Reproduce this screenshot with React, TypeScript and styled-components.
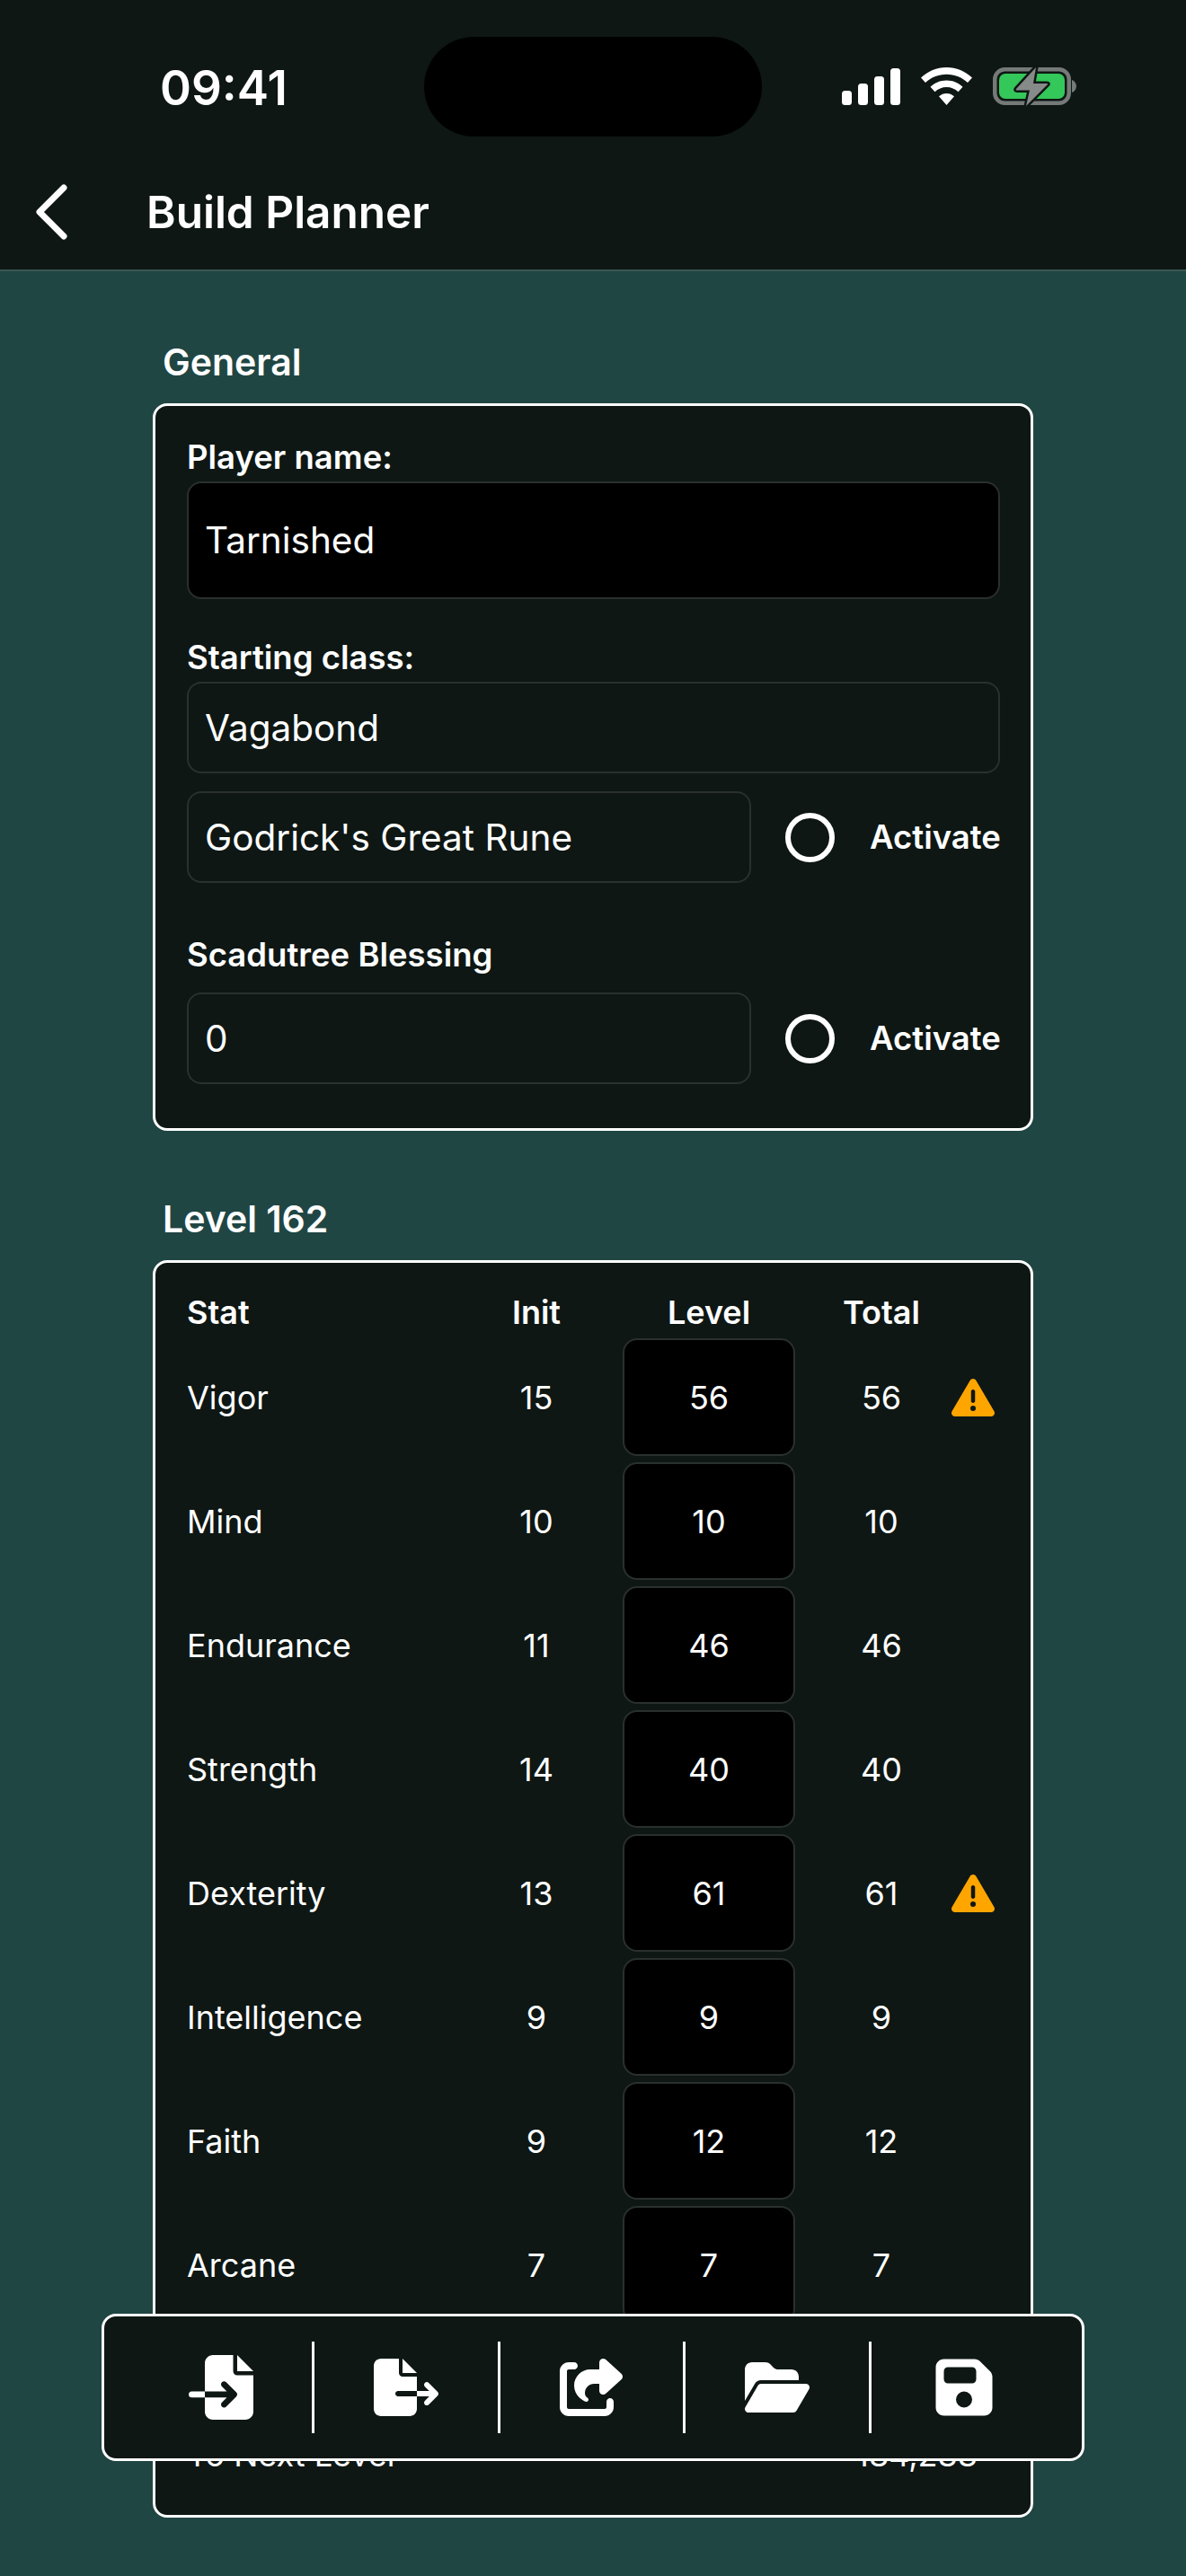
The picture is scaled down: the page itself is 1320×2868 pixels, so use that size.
import React from "react";
import styled, { createGlobalStyle } from "styled-components";
import {
  FaFileExport,
  FaFileImport,
  FaFloppyDisk,
  FaFolderOpen,
  FaShareFromSquare,
  FaTriangleExclamation,
} from "react-icons/fa6";

const GlobalStyle = createGlobalStyle`
  html, body {
    margin: 0;
    padding: 0;
    background: #204644;
  }
  * {
    box-sizing: border-box;
  }
`;

// PAGE
const Screen = styled.div`
  position: relative;
  width: 1320px;
  height: 2868px;
  overflow: hidden;
  background: #204644;
  color: #fff;
  font-family: Inter, "Liberation Sans", sans-serif;
`;

// HEADER
const Header = styled.header`
  height: 302px;
  background: #0e1714;
  border-bottom: 2px solid #3b5653;
`;

const StatusBar = styled.div`
  display: flex;
  align-items: flex-start;
  height: 190px;
  padding: 41px 122px 0 178px;
`;

const Clock = styled.div`
  width: 294px;
  padding-top: 29px;
  font-size: 53px;
  line-height: 56px;
  font-weight: 600;
`;

const Island = styled.div`
  width: 376px;
  height: 111px;
  border-radius: 56px;
  background: #000;
`;

const StatusIcons = styled.div`
  display: flex;
  align-items: center;
  gap: 23px;
  margin-left: 89px;
  padding-top: 32px;
`;

const NavBar = styled.div`
  display: flex;
  align-items: center;
  height: 92px;
  padding-left: 38px;
`;

const BackIcon = styled.svg`
  width: 40px;
  height: 62px;
  margin-right: 85px;
`;

const Title = styled.h1`
  margin: 0;
  font-size: 49.5px;
  line-height: 60px;
  font-weight: 600;
`;

// SECTIONS
const Main = styled.main`
  padding: 0 170px;
`;

const SectionTitle = styled.h2<{ $top: number }>`
  margin: ${(p) => p.$top}px 0 0 11px;
  height: 51px;
  font-size: 41px;
  line-height: 51px;
  font-weight: 600;
`;

const Card = styled.section<{ $height: number }>`
  height: ${(p) => p.$height}px;
  margin-top: 20px;
  padding: 33px 34px 0 35px;
  background: #0e1714;
  border: 3px solid #fff;
  border-radius: 16px;
  overflow: hidden;
`;

const Label = styled.div<{ $top?: number }>`
  height: 48px;
  margin-top: ${(p) => p.$top ?? 0}px;
  font-size: 36.5px;
  line-height: 48px;
  font-weight: 600;
`;

const Field = styled.div<{ $dark?: boolean; $tall?: boolean }>`
  display: flex;
  flex: 1;
  align-items: center;
  height: ${(p) => (p.$tall ? 131 : 102)}px;
  padding: 0 18px;
  background: ${(p) => (p.$dark ? "#000" : "#0e1714")};
  border: 2px solid #2a302e;
  border-radius: 16px;
  font-size: 40.5px;
  font-weight: 400;
`;

const FieldRow = styled.div<{ $top?: number }>`
  display: flex;
  align-items: center;
  margin-top: ${(p) => p.$top ?? 0}px;
`;

const Radio = styled.div`
  flex: none;
  width: 55px;
  height: 55px;
  margin: 0 39px 0 38px;
  border: 6px solid #fff;
  border-radius: 50%;
`;

const ActivateText = styled.div`
  flex: none;
  width: 145px;
  font-size: 36.5px;
  font-weight: 600;
  white-space: nowrap;
`;

// STATS TABLE
const StatGrid = styled.div`
  display: grid;
  grid-template-columns: 293px 192px 192px 192px 1fr;
  align-items: center;
`;

const HeaderRow = styled(StatGrid)`
  height: 48px;
  margin: -2px 0 5px;
  font-size: 36px;
  line-height: 48px;
  font-weight: 600;
`;

const StatRow = styled(StatGrid)`
  height: 131px;
  margin-bottom: 7px;
  font-size: 36px;
`;

const Cell = styled.div<{ $center?: boolean }>`
  text-align: ${(p) => (p.$center ? "center" : "left")};
`;

const LevelBox = styled.div`
  display: flex;
  align-items: center;
  justify-content: center;
  height: 131px;
  background: #000;
  border: 2px solid #2a302e;
  border-radius: 16px;
`;

const Warning = styled(FaTriangleExclamation)`
  display: block;
  margin-left: -18px;
  color: #ffa500;
`;

const FooterRow = styled.div`
  display: flex;
  justify-content: space-between;
  margin-top: 122px;
  padding-right: 25px;
  font-size: 36px;
  line-height: 48px;
`;

// TOOLBAR
const Toolbar = styled.nav`
  position: absolute;
  left: 113px;
  top: 2576px;
  display: flex;
  align-items: center;
  width: 1094px;
  height: 164px;
  padding: 0 28px;
  background: #0e1714;
  border: 3px solid #fff;
  border-radius: 16px;
`;

const ToolButton = styled.div<{ $last?: boolean }>`
  display: flex;
  align-items: center;
  justify-content: center;
  width: 207px;
  height: 102px;
  border-right: ${(p) => (p.$last ? "none" : "3px solid #fff")};
`;

const stats = [
  { name: "Vigor", init: 15, level: 56, warn: true },
  { name: "Mind", init: 10, level: 10 },
  { name: "Endurance", init: 11, level: 46 },
  { name: "Strength", init: 14, level: 40 },
  { name: "Dexterity", init: 13, level: 61, warn: true },
  { name: "Intelligence", init: 9, level: 9 },
  { name: "Faith", init: 9, level: 12 },
  { name: "Arcane", init: 7, level: 7 },
];

export default function App() {
  return (
    <>
      <GlobalStyle />
      <Screen>
        <Header>
          <StatusBar>
            <Clock>09:41</Clock>
            <Island />
            <StatusIcons>
              <svg width="65" height="41" viewBox="0 0 65 41" fill="#fff">
                <rect x="0" y="25" width="11" height="16" rx="3.5" />
                <rect x="18" y="17" width="11" height="24" rx="3.5" />
                <rect x="36" y="9" width="11" height="32" rx="3.5" />
                <rect x="54" y="0" width="11" height="41" rx="3.5" />
              </svg>
              <svg width="57" height="42" viewBox="0 0 57 42" fill="#fff">
                <path d="M28.5 0C17.5 0 7.7 4.3 0 11.5L5 17C11 11.3 19.3 7.7 28.5 7.7S46 11.3 52 17L57 11.5C49.3 4.3 39.5 0 28.5 0Z" />
                <path d="M28.5 14.5C21.5 14.5 15 17.3 10.5 21.8L15.5 27.3C19 24 23.5 22 28.5 22S38 24 41.5 27.3L46.5 21.8C42 17.3 35.5 14.5 28.5 14.5Z" />
                <path d="M28.5 29C25.3 29 22.4 30.2 20 32.3L28.5 42L37 32.3C34.6 30.2 31.7 29 28.5 29Z" />
              </svg>
              <svg width="93" height="46" viewBox="0 0 93 46">
                <rect x="2.25" y="4.25" width="82.5" height="37.5" rx="11" fill="none" stroke="#757a78" strokeWidth="4.5" />
                <rect x="7" y="9" width="73" height="28" rx="7" fill="#34c759" />
                <path d="M88 16C91 17 93 20 93 23S91 29 88 30Z" fill="#757a78" />
                <path
                  d="M48 2L26 26Q25 27.500 27 27.500H41L37 45L61 21Q62 20 60 20H45Z"
                  fill="#868a88"
                  stroke="#0e1714"
                  strokeWidth="5"
                  strokeLinejoin="round"
                  paintOrder="stroke"
                />
              </svg>
            </StatusIcons>
          </StatusBar>
          <NavBar>
            <BackIcon viewBox="0 0 40 62" fill="none">
              <path d="M33 4L6 31L33 58" stroke="#fff" strokeWidth="7" strokeLinecap="round" strokeLinejoin="round" />
            </BackIcon>
            <Title>Build Planner</Title>
          </NavBar>
        </Header>
        <Main>
          <SectionTitle $top={76}>General</SectionTitle>
          <Card $height={810}>
            <Label>Player name:</Label>
            <FieldRow $top={3}>
              <Field $dark $tall>
                Tarnished
              </Field>
            </FieldRow>
            <Label $top={41}>Starting class:</Label>
            <FieldRow $top={3}>
              <Field>Vagabond</Field>
            </FieldRow>
            <FieldRow $top={20}>
              <Field>Godrick's Great Rune</Field>
              <Radio />
              <ActivateText>Activate</ActivateText>
            </FieldRow>
            <Label $top={56}>Scadutree Blessing</Label>
            <FieldRow $top={18}>
              <Field>0</Field>
              <Radio />
              <ActivateText>Activate</ActivateText>
            </FieldRow>
          </Card>
          <SectionTitle $top={73}>Level 162</SectionTitle>
          <Card $height={1400}>
            <HeaderRow>
              <Cell>Stat</Cell>
              <Cell $center>Init</Cell>
              <Cell $center>Level</Cell>
              <Cell $center>Total</Cell>
            </HeaderRow>
            {stats.map((s) => (
              <StatRow key={s.name}>
                <Cell>{s.name}</Cell>
                <Cell $center>{s.init}</Cell>
                <LevelBox>{s.level}</LevelBox>
                <Cell $center>{s.level}</Cell>
                {s.warn && <Warning size={48} />}
              </StatRow>
            ))}
            <FooterRow>
              <span>To Next Level</span>
              <span>184,233</span>
            </FooterRow>
          </Card>
        </Main>
        <Toolbar>
          <ToolButton>
            <FaFileImport size={72} />
          </ToolButton>
          <ToolButton>
            <FaFileExport size={72} />
          </ToolButton>
          <ToolButton>
            <FaShareFromSquare size={72} />
          </ToolButton>
          <ToolButton>
            <FaFolderOpen size={72} />
          </ToolButton>
          <ToolButton $last>
            <FaFloppyDisk size={72} />
          </ToolButton>
        </Toolbar>
      </Screen>
    </>
  );
}
